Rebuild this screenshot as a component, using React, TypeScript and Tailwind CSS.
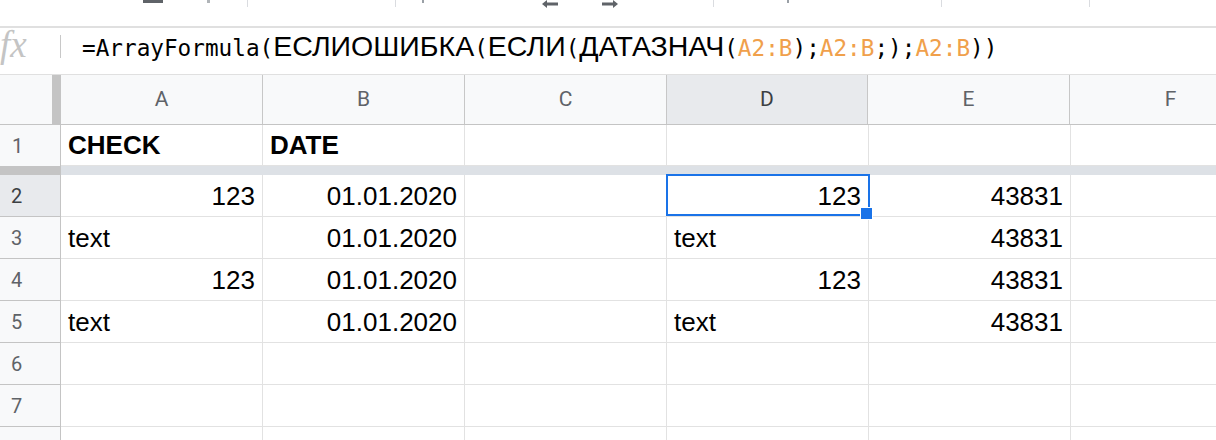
import React from 'react';

type Cell = { v: string; right?: boolean; bold?: boolean; selected?: boolean } | null;

const COLS = ['A', 'B', 'C', 'D', 'E', 'F'];

const HEADER_ROW: Cell[] = [
  { v: 'CHECK', bold: true },
  { v: 'DATE', bold: true },
  null,
  null,
  null,
  null,
];

const DATA_ROWS: { n: number; cells: Cell[] }[] = [
  {
    n: 2,
    cells: [
      { v: '123', right: true },
      { v: '01.01.2020', right: true },
      null,
      { v: '123', right: true, selected: true },
      { v: '43831', right: true },
      null,
    ],
  },
  {
    n: 3,
    cells: [{ v: 'text' }, { v: '01.01.2020', right: true }, null, { v: 'text' }, { v: '43831', right: true }, null],
  },
  {
    n: 4,
    cells: [
      { v: '123', right: true },
      { v: '01.01.2020', right: true },
      null,
      { v: '123', right: true },
      { v: '43831', right: true },
      null,
    ],
  },
  {
    n: 5,
    cells: [{ v: 'text' }, { v: '01.01.2020', right: true }, null, { v: 'text' }, { v: '43831', right: true }, null],
  },
  { n: 6, cells: [null, null, null, null, null, null] },
  { n: 7, cells: [null, null, null, null, null, null] },
];

const mono = "font-['DejaVu_Sans_Mono',monospace] text-[22.7px]";
const sans = "font-['Liberation_Sans',Arial,sans-serif] text-[28.5px]";

function Arrow({ dir }: { dir: 'left' | 'right' }) {
  return (
    <svg width="16" height="8" viewBox="0 0 16 8" className="shrink-0">
      {dir === 'left' ? (
        <>
          <polygon points="0,4 5,0 5,8" fill="#5f6368" />
          <rect x="4" y="2.5" width="12" height="3" fill="#5f6368" />
        </>
      ) : (
        <>
          <polygon points="16,4 11,0 11,8" fill="#5f6368" />
          <rect x="0" y="2.5" width="12" height="3" fill="#5f6368" />
        </>
      )}
    </svg>
  );
}

function GridCell({ cell }: { cell: Cell }) {
  return (
    <div
      className={
        'relative w-[202px] shrink-0 h-full border-r border-b border-[#e2e2e2] flex items-center px-[7px] ' +
        (cell?.right ? 'justify-end' : 'justify-start')
      }
    >
      {cell && (
        <span className={'text-[26px] text-black leading-none ' + (cell.bold ? 'font-bold' : '')}>{cell.v}</span>
      )}
      {cell?.selected && (
        <>
          <div className="absolute left-[-1px] top-[-1px] w-[204px] h-[42px] border-2 border-[#1a73e8] pointer-events-none" />
          <div className="absolute left-[193px] top-[32px] w-[13px] h-[13px] bg-[#1a73e8] border border-white z-10" />
        </>
      )}
    </div>
  );
}

export default function App() {
  return (
    <div className="w-[1216px] h-[440px] overflow-hidden bg-white font-['Liberation_Sans',Arial,sans-serif]">
      {/* Toolbar remnants */}
      <div className="h-[28px] border-b-2 border-[#e0e0e0] flex items-start">
        <div className="ml-[143px] w-[20px] h-[3px] bg-[#5f6368]" />
        <div className="ml-[44px] w-[3px] h-[3px] bg-[#b0b4b8]" />
        <div className="ml-[37px] w-px h-[7px] bg-[#dadce0]" />
        <div className="ml-[147px] w-px h-[7px] bg-[#dadce0]" />
        <div className="ml-[26px] w-[2px] h-[3px] bg-[#9aa0a6]" />
        <div className="ml-[118px]">
          <Arrow dir="left" />
        </div>
        <div className="ml-[44px]">
          <Arrow dir="right" />
        </div>
        <div className="ml-[95px] w-px h-[7px] bg-[#dadce0]" />
        <div className="ml-[73px] w-[2px] h-[3px] bg-[#9aa0a6]" />
        <div className="ml-[152px] w-px h-[7px] bg-[#dadce0]" />
        <div className="ml-[147px] w-px h-[7px] bg-[#dadce0]" />
      </div>

      {/* Formula bar */}
      <div className="h-[47px] pb-[9px] border-b border-[#e0e0e0] flex items-center">
        <div className="w-[60px] shrink-0 flex items-center">
          <span className="font-['Liberation_Serif',serif] italic text-[37px] text-[#c4c4c4] leading-none -mt-[4px]">fx</span>
        </div>
        <div className="w-px h-[23px] bg-[#c8c8c8]" />
        <div className="ml-[21px] whitespace-nowrap text-black leading-none flex items-baseline">
          <span className={mono}>=ArrayFormula(</span>
          <span className={sans}>ЕСЛИОШИБКА</span>
          <span className={mono}>(</span>
          <span className={sans}>ЕСЛИ</span>
          <span className={mono}>(</span>
          <span className={sans}>ДАТАЗНАЧ</span>
          <span className={mono}>(</span>
          <span className={mono + ' text-[#f0a04b]'}>A2:B</span>
          <span className={mono}>);</span>
          <span className={mono + ' text-[#f0a04b]'}>A2:B</span>
          <span className={mono}>;);</span>
          <span className={mono + ' text-[#f0a04b]'}>A2:B</span>
          <span className={mono}>))</span>
        </div>
      </div>

      {/* Column headers */}
      <div className="h-[50px] flex border-b border-[#c4c4c4] font-['Roboto',sans-serif] text-[21px] text-[#5f6368]">
        <div className="w-[61px] shrink-0 bg-[#f8f9fa] flex justify-end">
          <div className="w-[9px] h-full bg-[#c4c4c4]" />
        </div>
        {COLS.map((c) => (
          <div
            key={c}
            className={
              'w-[202px] shrink-0 border-r border-[#c7c7c7] flex items-center justify-center ' +
              (c === 'D' ? 'bg-[#e8eaed] text-[#3c4043] border-l border-l-[#c7c7c7] -ml-px' : 'bg-[#f8f9fa]')
            }
          >
            {c}
          </div>
        ))}
      </div>

      {/* Row 1 (frozen) */}
      <div className="h-[41px] flex">
        <div className="w-[61px] shrink-0 h-full bg-[#f8f9fa] border-r border-[#c4c4c4] flex items-center pl-[12px] font-['Roboto',sans-serif] text-[20px] text-[#5f6368]">
          1
        </div>
        {HEADER_ROW.map((cell, i) => (
          <GridCell key={i} cell={cell} />
        ))}
      </div>

      {/* Freeze divider */}
      <div className="h-[9px] flex">
        <div className="w-[61px] shrink-0 bg-[#c4c4c4]" />
        <div className="flex-1 bg-[#dde1e6]" />
      </div>

      {DATA_ROWS.map((row) => (
        <div key={row.n} className="h-[42px] flex">
          <div
            className={
              'w-[61px] shrink-0 h-full border-r border-b border-r-[#c4c4c4] border-b-[#c4c4c4] flex items-center pl-[11px] font-[\'Roboto\',sans-serif] text-[20px] ' +
              (row.n === 2 ? 'bg-[#e8eaed] text-[#3c4043]' : 'bg-[#f8f9fa] text-[#5f6368]')
            }
          >
            {row.n}
          </div>
          {row.cells.map((cell, i) => (
            <GridCell key={i} cell={cell} />
          ))}
        </div>
      ))}

      {/* Row 8, cut off by the window */}
      <div className="h-[42px] flex">
        <div className="w-[61px] shrink-0 h-full bg-[#f8f9fa] border-r border-[#c4c4c4]" />
        {COLS.map((c) => (
          <GridCell key={c} cell={null} />
        ))}
      </div>
    </div>
  );
}
